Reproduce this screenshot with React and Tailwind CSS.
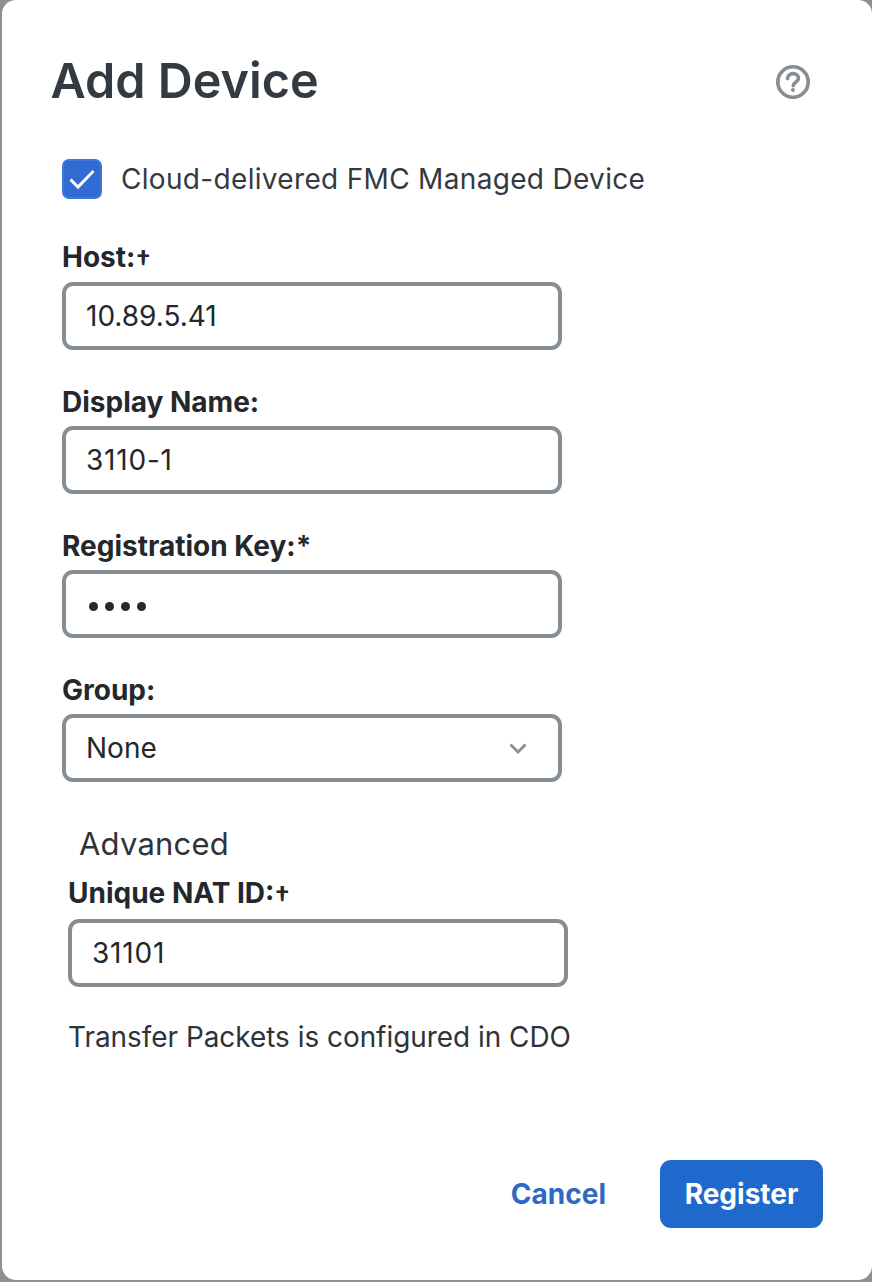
/**
 * Dialogo "Add Device"
 */

import React from 'react';

const boxClass = 'flex h-[68px] w-[500px] items-center rounded-[11px] border-[4px] border-[#858d95] bg-white px-[20px] text-[28px] text-[#24282d]';
const labelClass = 'h-[32px] text-[28px] font-bold leading-[32px] text-[#24282d]';

const Dagger = () => <span className="relative top-[4px] text-[28px] font-semibold leading-[28px]">†</span>;

const Field = ({ label, dagger, gap = 'mb-[8px]', children }) => (
  <div className="mb-[36px]">
    <div className={`${gap} ${labelClass}`}>
      {label}
      {dagger && <Dagger />}
    </div>
    {children}
  </div>
);

const HelpIcon = () => (
  <svg className="mt-[1px]" width="36" height="36" viewBox="0 0 36 36" fill="none" stroke="#858d95" strokeWidth="3.6" strokeLinecap="round">
    <circle cx="18" cy="18" r="15.2" />
    <path d="M12.6 14.6c0-3 2.4-5 5.4-5s5.4 2 5.4 4.8c0 3.6-5.2 3.8-5.2 7.4" />
    <circle cx="17.9" cy="26" r="1.2" fill="#858d95" strokeWidth="1.4" />
  </svg>
);

export default function App() {
  return (
    <div className="h-[1282px] w-[872px] bg-[#8f8f8f] pb-[2px] pl-[2px] font-['Inter',sans-serif]">
      <div className="flex h-full flex-col rounded-[14px] bg-white">
        <div className="flex items-center justify-between pl-[48.5px] pr-[61px] pt-[51px]">
          <h1 className="h-[60px] text-[48.5px] font-semibold leading-[60px] text-[#343a42]">Add Device</h1>
          <HelpIcon />
        </div>

        <div className="pl-[60px] pt-[47px]">
          <label className="mb-[41px] flex items-center gap-[19px]">
            <span className="flex h-[40px] w-[40px] items-center justify-center rounded-[7px] border-[2px] border-[#3f78dc] bg-[#2f6bd2]">
              <svg width="28" height="22" viewBox="0 0 28 22" fill="none" stroke="white" strokeWidth="3">
                <path d="M2.5 11.5l7.5 7.5L25.5 3" />
              </svg>
            </span>
            <span className="text-[28px] tracking-[0.32px] text-[#34393f]">Cloud-delivered FMC Managed Device</span>
          </label>

          <Field label="Host:" dagger gap="mb-[9px]">
            <div className={boxClass}>10.89.5.41</div>
          </Field>
          <Field label="Display Name:">
            <div className={`${boxClass} tracking-[0.8px]`}>3110-1</div>
          </Field>
          <Field label="Registration Key:*">
            <div className={boxClass}>
              <span className="flex gap-[7px] pl-[2.5px] pt-[4px]">
                <span className="h-[9px] w-[9px] rounded-full bg-[#24282d]" />
                <span className="h-[9px] w-[9px] rounded-full bg-[#24282d]" />
                <span className="h-[9px] w-[9px] rounded-full bg-[#24282d]" />
                <span className="h-[9px] w-[9px] rounded-full bg-[#24282d]" />
              </span>
            </div>
          </Field>
          <Field label="Group:">
            <div className={`${boxClass} justify-between pr-[31px]`}>
              None
              <svg width="18" height="11" viewBox="0 0 18 11" fill="none" stroke="#858d95" strokeWidth="2.8">
                <path d="M1.5 1.5L9 9l7.5-7.5" />
              </svg>
            </div>
          </Field>

          <div className="ml-[17px] mt-[42px] h-[40px] text-[31px] leading-[40px] tracking-[0.2px] text-[#2e3339]">Advanced</div>

          <div className="ml-[6px] mt-[13px]">
            <div className={`mb-[10px] ${labelClass}`}>
              Unique NAT ID:
              <Dagger />
            </div>
            <div className={`${boxClass} tracking-[0.8px]`}>31101</div>
            <p className="mt-[32px] text-[27.9px] leading-[36px] text-[#2e3339]">Transfer Packets is configured in CDO</p>
          </div>
        </div>

        <div className="mt-auto flex items-center justify-end gap-[54px] pb-[52px] pr-[49px]">
          <button type="button" className="text-[28px] font-bold text-[#2f69c4]">Cancel</button>
          <button type="button" className="h-[68px] w-[163px] rounded-[11px] bg-[#1f69cc] text-[28px] font-bold text-white">Register</button>
        </div>
      </div>
    </div>
  );
}
